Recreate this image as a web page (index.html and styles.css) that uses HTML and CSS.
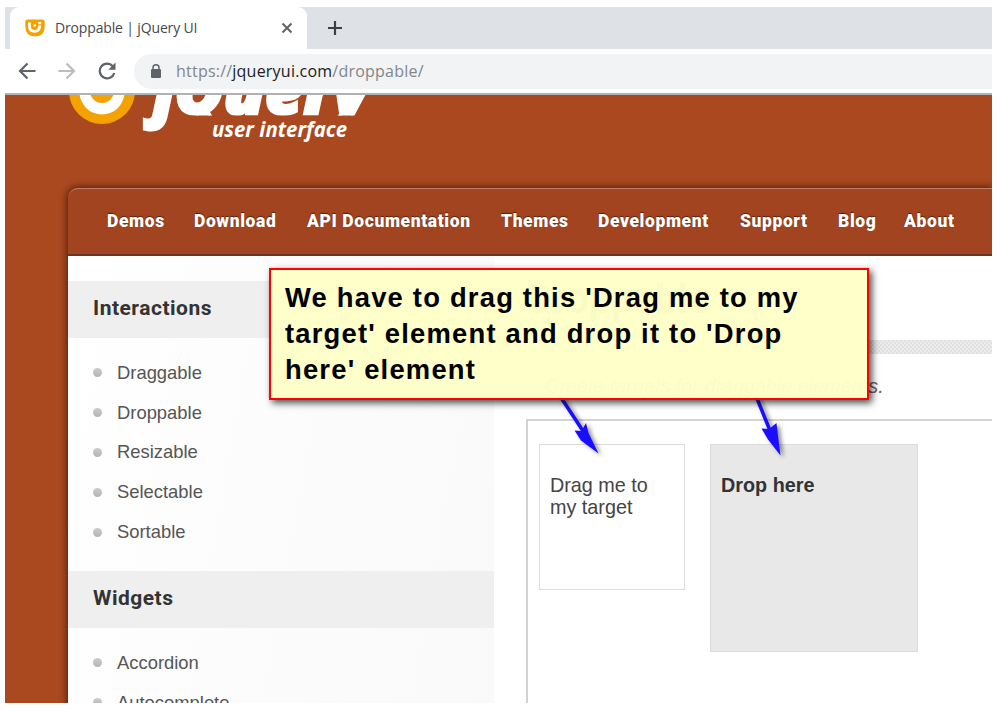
FILE: index.html
```
<!DOCTYPE html>
<html lang="en">
<head>
<meta charset="utf-8">
<title>Droppable | jQuery UI</title>
<link rel="stylesheet" href="styles.css">
</head>
<body>
<div class="window">
  <div class="tabstrip">
    <div class="tab">
      <svg class="favicon" viewBox="0 0 20 18" width="20" height="18"><path d="M2.500 .5h15q2.200 0 2.200 2.200V7q0 10.500-9.700 10.500T.3 7V2.700Q.3.5 2.500 .5z" fill="#f3a200"/><path d="M4.500 3.500v4q0 4.800 5.200 4.800 4.800 0 5-5.800" fill="none" stroke="#fff" stroke-width="2.800"/><path d="M13.200 3h3v2.200h-3zM8.500 5.500h2.500v2h-2.500z" fill="#fff"/></svg>
      <span class="tab-title">Droppable | jQuery UI</span>
      <svg class="close" viewBox="0 0 12 12" width="12" height="12"><path d="M1.500 1.500l9 9m0-9l-9 9"/></svg>
    </div>
    <svg class="plus" viewBox="0 0 16 16" width="16" height="16"><path d="M8 1v14M1 8h14"/></svg>
  </div>
  <div class="toolbar">
    <svg class="tool" viewBox="0 0 18 18" width="18" height="18"><path d="M17.500 9H2M9.500 1.500L2 9l7.500 7.500"/></svg>
    <svg class="tool faded" viewBox="0 0 18 18" width="18" height="18"><path d="M.5 9H16M8.500 1.500L16 9l-7.500 7.500"/></svg>
    <svg class="tool" viewBox="0 0 18 18" width="18" height="18"><path d="M14.800 4.200A7.400 7.400 0 1 0 16.300 11" /><path d="M17.500 .5v7.200h-7.200z" class="solid"/></svg>
    <div class="omnibox">
      <svg class="lock" viewBox="0 0 10 14" width="10" height="14"><path d="M2 6V3.800a3 3 0 0 1 6 0V6" fill="none" stroke="#5f6368" stroke-width="1.500"/><rect y="5" width="10" height="9" rx="1" fill="#5f6368"/></svg>
      <span class="url">https://<b>jqueryui.com</b>/droppable/</span>
    </div>
  </div>
  <div class="page">
    <header class="banner">
      <svg class="logo" viewBox="0 0 300 50" width="300" height="50" role="img" aria-label="jQuery user interface">
        <defs><clipPath id="wordmark"><path d="M60 0h240v20.500H104v20H60z"/></clipPath></defs>
        <circle cx="34" cy="-4" r="33" fill="#f3a200"/>
        <circle cx="34" cy="-3" r="22.500" fill="#fff"/>
        <circle cx="34" cy="-4" r="12" fill="#f3a200"/>
        <g clip-path="url(#wordmark)"><text class="brand" x="85" y="19" textLength="216" lengthAdjust="spacingAndGlyphs">jQuery</text></g>
        <text class="tagline" x="144" y="42" textLength="135" lengthAdjust="spacingAndGlyphs">user interface</text>
      </svg>
    </header>
    <div class="container">
      <nav class="nav"><a>Demos</a><a>Download</a><a>API Documentation</a><a>Themes</a><a>Development</a><a>Support</a><a>Blog</a><a>About</a></nav>
      <div class="columns">
        <aside class="sidebar">
          <h3>Interactions</h3>
          <ul><li>Draggable</li><li>Droppable</li><li>Resizable</li><li>Selectable</li><li>Sortable</li></ul>
          <h3>Widgets</h3>
          <ul><li>Accordion</li><li>Autocomplete</li></ul>
        </aside>
        <main class="content">
          <h1>Droppable</h1>
          <div class="rule"></div>
          <p class="desc">Create targets for draggable elements.</p>
          <div class="demo">
            <div class="drag">Drag me to my target</div>
            <div class="drop">Drop here</div>
          </div>
        </main>
      </div>
    </div>
  </div>
</div>
<svg class="arrows" viewBox="0 0 260 70" width="260" height="70">
  <path d="M20 6L45 44M216 6L233 48" stroke="#1b0dff" stroke-width="3.500" fill="none"/>
  <path d="M58.500 63.500L41 50.500L34.500 40.500l7 .5 4.500-8 2.500 10zM240.500 65.500L228 49.500L221.500 38.500l7.500 .5 7.500-6 1.500 13z" fill="#1b0dff"/>
</svg>
<div class="callout">We have to drag this 'Drag me to my<br>target' element and drop it to 'Drop<br>here' element</div>
</body>
</html>
```
FILE: styles.css
```
* { box-sizing: border-box; }
body { margin: 0; background: #fff; width: 999px; height: 709px; overflow: hidden; font-family: "Liberation Sans", Arial, sans-serif; }
.window { width: 987px; height: 696px; margin: 7px 0 0 5px; overflow: hidden; }

.tabstrip { height: 42px; background: #dee1e6; display: flex; align-items: center; }
.tab { width: 297px; height: 42px; margin-left: 5px; background: #fff; border-radius: 9px 9px 0 0; display: flex; align-items: center; padding: 0 14px 0 15px; }
.favicon { flex: none; }
.tab-title { font: 14px/20px "Open Sans", sans-serif; letter-spacing: -0.15px; color: #45484d; margin-left: 10px; white-space: nowrap; }
.close { margin-left: auto; fill: none; stroke: #5f6368; stroke-width: 2; }
.plus { margin-left: 20px; fill: none; stroke: #3c4043; stroke-width: 2.2; }

.toolbar { height: 46px; background: #fff; border-bottom: 2px solid #b2b2b2; display: flex; align-items: center; padding-left: 13px; gap: 22px; }
.tool { flex: none; fill: none; stroke: #5f6368; stroke-width: 2.2; }
.tool .solid { fill: #5f6368; stroke: none; }
.faded { stroke: #babcbe; }
.omnibox { flex: 1; height: 35px; margin-left: -4px; border-radius: 18px 0 0 18px; background: #f1f3f4; display: flex; align-items: center; padding-left: 17px; }
.url { margin-left: 15px; font: 16px/24px "Open Sans", sans-serif; letter-spacing: 0.22px; color: #80868b; white-space: nowrap; }
.url b { font-weight: 400; color: #202124; }

.page { height: 608px; background: #aa4820; overflow: hidden; }
.banner { height: 93px; padding-left: 63px; }
.logo { display: block; overflow: hidden; }
.brand { font: italic 800 66px "Open Sans", sans-serif; fill: #fff; stroke: #fff; stroke-width: 3; }
.tagline { font: italic 700 21px "Noto Sans", sans-serif; fill: #fff; }

.container { margin-left: 63px; height: 560px; border-radius: 10px 0 0 0; box-shadow: 0 0 7px 1px rgba(50, 15, 0, .75); }
.nav { height: 68px; background: #a2441f; border-top: 1px solid #c08068; border-bottom: 2px solid #673322; border-radius: 10px 0 0 0; padding: 0 0 1px 39px; display: grid; grid-template-columns: 57px 83px 164px 67px 112px 68px 36px 52px; column-gap: 30px; align-items: center; font: 900 17.5px/24px Roboto, sans-serif; letter-spacing: 0.6px; color: #fff; text-shadow: 0 -1px 1px rgba(0, 0, 0, .5); white-space: nowrap; }
.columns { display: flex; background: #fff; height: 492px; }
.sidebar { width: 426px; flex: none; padding-top: 25px; background: linear-gradient(100deg, #fff, #f9f9f9); }
.sidebar h3 { margin: 0; height: 57px; padding-left: 25px; font: 700 21px/55px Roboto, sans-serif; letter-spacing: 0.5px; color: #333; background: #efefef; }
.sidebar ul { list-style: none; margin: 0; padding: 15px 0 19px 25px; }
.sidebar li { height: 39.8px; display: flex; align-items: center; gap: 15px; font-size: 18.4px; color: #555; }
.sidebar li::before { content: ""; width: 9px; height: 9px; border-radius: 50%; background: linear-gradient(#ccc, #b5b5b5); }
.content { flex: 1; padding: 20px 0 0 32px; }
.content h1 { margin: 0; height: 64px; font: 700 40px/48px Roboto, sans-serif; color: #333; }
.rule { height: 14px; background: repeating-conic-gradient(#e0e0e0 0 25%, #ececec 0 50%) 0 0 / 4px 4px; }
.desc { margin: 22px 0 22px 19px; font: italic 19.8px/21px "Liberation Sans", sans-serif; color: #666; }
.demo { height: 300px; border: 2px solid #d3d3d3; border-right: 0; padding: 23px 0 0 11px; display: flex; align-items: flex-start; gap: 25px; font-size: 19.8px; line-height: 22px; color: #444; }
.drag { width: 146px; height: 146px; border: 1px solid #ddd; padding: 29px 24px 0 10px; }
.drop { width: 208px; height: 208px; border: 1px solid #dcdcdc; background: #e8e8e8; padding: 29px 10px 0; font-weight: 700; color: #333; }

.callout { position: absolute; left: 269px; top: 268px; width: 600px; height: 132px; border: 2px solid #f00; background: rgba(255, 255, 200, .978); padding: 10px 0 0 14px; font: 700 27.4px/36px "Liberation Sans", Arial, sans-serif; letter-spacing: 1.2px; color: #000; white-space: nowrap; box-shadow: 3px 3px 7px rgba(0, 0, 0, .7); }
.arrows { position: absolute; left: 540px; top: 390px; filter: drop-shadow(3px 2px 2px rgba(0, 0, 0, .45)); }
```
